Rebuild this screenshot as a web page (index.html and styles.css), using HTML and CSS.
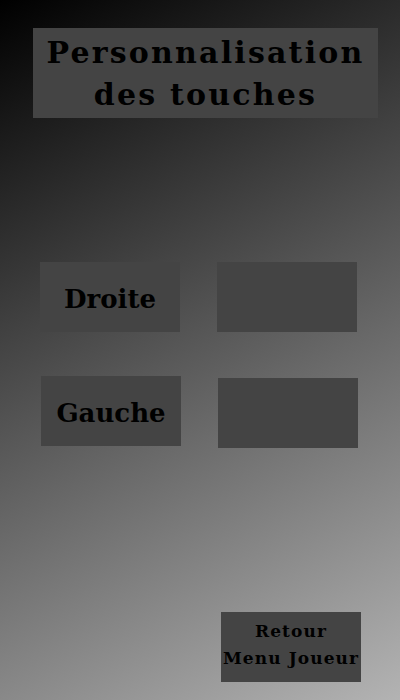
FILE: index.html
```html
<!DOCTYPE html>
<html lang="fr">
<head>
<meta charset="utf-8">
<title>Personnalisation des touches</title>
<link rel="stylesheet" href="styles.css">
</head>
<body>
<div class="screen">
  <div class="title">Personnalisation<br>des touches</div>
  <div class="keys">
    <div class="row row-one">
      <div class="box label">Droite</div>
      <div class="box field"></div>
    </div>
    <div class="row row-two">
      <div class="box label">Gauche</div>
      <div class="box field field-low"></div>
    </div>
  </div>
  <div class="box back">Retour<br>Menu Joueur</div>
</div>
</body>
</html>
```

FILE: styles.css
```css
html, body {
  margin: 0;
  padding: 0;
}
body {
  width: 400px;
  height: 700px;
  overflow: hidden;
  font-family: "DejaVu Serif", "Liberation Serif", serif;
  font-weight: bold;
  color: #000;
}
.screen {
  width: 400px;
  height: 700px;
  background: linear-gradient(151.6deg, #000000 0%, #b3b3b3 100%);
  display: flex;
  flex-direction: column;
  align-items: flex-start;
}
.title {
  box-sizing: border-box;
  margin: 28px 0 0 33px;
  width: 345px;
  height: 90px;
  padding-top: 2px;
  background: #444444;
  display: flex;
  align-items: center;
  justify-content: center;
  text-align: center;
  font-size: 30px;
  line-height: 42px;
  letter-spacing: 2.2px;
  white-space: nowrap;
}
.box {
  box-sizing: border-box;
  width: 140px;
  height: 70px;
  background: #444444;
  display: flex;
  align-items: center;
  justify-content: center;
  text-align: center;
}
.keys {
  margin-top: 144px;
  display: flex;
  flex-direction: column;
}
.row {
  display: flex;
  align-items: flex-start;
  gap: 37px;
}
.row-one {
  padding-left: 40px;
}
.row-two {
  margin-top: 44px;
  padding-left: 41px;
}
.label {
  font-size: 26px;
  padding-top: 4px;
}
.field-low {
  margin-top: 2px;
}
.back {
  margin: 164px 0 0 221px;
  padding-bottom: 5px;
  font-size: 17px;
  line-height: 27px;
  letter-spacing: 1.1px;
  white-space: nowrap;
}
```
